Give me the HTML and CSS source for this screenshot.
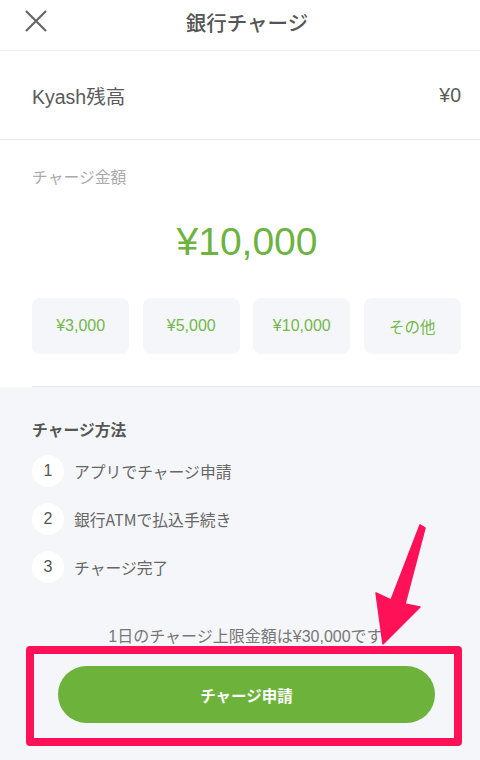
FILE: index.html
```html
<!DOCTYPE html>
<html lang="ja">
<head>
<meta charset="utf-8">
<link rel="stylesheet" href="styles.css">
</head>
<body>
<div class="page">
  <header class="header">
    <svg class="close" width="22" height="22" viewBox="0 0 22 22"><path d="M1 1L21 21M21 1L1 21" stroke="#666" stroke-width="2.2" fill="none"/></svg>
    <div class="title">銀行チャージ</div>
  </header>
  <div class="balance">
    <span>Kyash残高</span>
    <span>¥0</span>
  </div>
  <section class="amount-sec">
    <div class="label">チャージ金額</div>
    <div class="amount">¥10,000</div>
    <div class="chips">
      <div class="chip">¥3,000</div>
      <div class="chip">¥5,000</div>
      <div class="chip">¥10,000</div>
      <div class="chip">その他</div>
    </div>
    <div class="divider"></div>
  </section>
  <section class="method">
    <div class="m-title">チャージ方法</div>
    <div class="steps">
      <div class="step"><span class="num">1</span><span>アプリでチャージ申請</span></div>
      <div class="step"><span class="num">2</span><span>銀行ATMで払込手続き</span></div>
      <div class="step"><span class="num">3</span><span>チャージ完了</span></div>
    </div>
    <div class="limit">1日のチャージ上限金額は¥30,000です</div>
    <div class="cta">チャージ申請</div>
  </section>
  <div class="hl-rect"></div>
  <svg class="hl-arrow" width="480" height="760" viewBox="0 0 480 760"><polygon points="420,525 425,528 405,604 420,607 383,644 376,593 391,600" fill="#ff1158" stroke="#ff1158" stroke-width="1.5" stroke-linejoin="round"/></svg>
</div>
</body>
</html>
```

FILE: styles.css
```css
* { box-sizing: border-box; margin: 0; padding: 0; }
html, body { background: #fff; }
body { width: 480px; height: 760px; overflow: hidden; font-family: "Liberation Sans", "Noto Sans CJK JP", sans-serif; color: #555; }
.page { position: relative; width: 480px; height: 760px; display: flex; flex-direction: column; }
.header { height: 51px; border-bottom: 1px solid #ededed; display: flex; align-items: flex-start; justify-content: center; padding-top: 8px; position: relative; }
.close { position: absolute; left: 25px; top: 10px; }
.title { font-size: 20.5px; line-height: 28px; font-weight: 500; color: #555; font-family: "Noto Sans CJK JP", sans-serif; margin-left: 14px; }
.balance { height: 89px; border-bottom: 1px solid #e8e8e8; display: flex; align-items: center; justify-content: space-between; padding: 0 19px 0 32px; font-size: 19.5px; color: #5a5a5a; }
.amount-sec { padding-top: 27px; }
.label { padding-left: 32px; font-size: 15.8px; line-height: 20px; color: #aaa; font-family: "Noto Sans CJK JP", sans-serif; }
.amount { margin-top: 30px; text-align: center; font-size: 39px; line-height: 50px; color: #6cb33f; margin-left: 14px; }
.chips { margin-top: 31px; display: grid; grid-template-columns: repeat(4, 1fr); gap: 13.3px; padding: 0 19px 0 32px; }
.chip { height: 56px; background: #f5f6fa; border-radius: 8px; display: flex; align-items: center; justify-content: center; font-size: 16px; color: #72b84a; }
.chip:last-child { font-family: "Noto Sans CJK JP", sans-serif; font-size: 15.5px; }
.divider { margin: 32px 0 0 32px; height: 1px; background: #e8e9ee; }
.method { flex: 1; background: #f5f6fa; padding-top: 32px; }
.m-title { padding-left: 32px; font-size: 15.8px; line-height: 22px; font-weight: 700; color: #555; font-family: "Noto Sans CJK JP", sans-serif; }
.steps { margin-top: 14px; padding-left: 32px; display: flex; flex-direction: column; gap: 16px; }
.step { display: flex; align-items: center; gap: 10px; height: 32px; font-size: 15.8px; color: #666; font-family: "Noto Sans CJK JP", sans-serif; }
.num { width: 32px; height: 32px; border-radius: 50%; background: #fff; display: flex; align-items: center; justify-content: center; font-family: "Liberation Sans", sans-serif; font-size: 16px; color: #555; }
.limit { margin-top: 43px; text-align: center; font-size: 16px; line-height: 22px; color: #777; padding-left: 11px; font-family: "Liberation Sans", "Noto Sans CJK JP", sans-serif; }
.cta { margin: 18px 0 0 58px; width: 377px; height: 57px; border-radius: 29px; background: #6db33b; color: #fff; display: flex; align-items: center; justify-content: center; font-size: 15.5px; font-weight: 700; font-family: "Noto Sans CJK JP", sans-serif; }
.hl-rect { position: absolute; left: 26px; top: 646px; width: 436px; height: 100px; border: 8px solid #ff1158; border-radius: 4px; }
.hl-arrow { position: absolute; left: 0; top: 0; }
```
